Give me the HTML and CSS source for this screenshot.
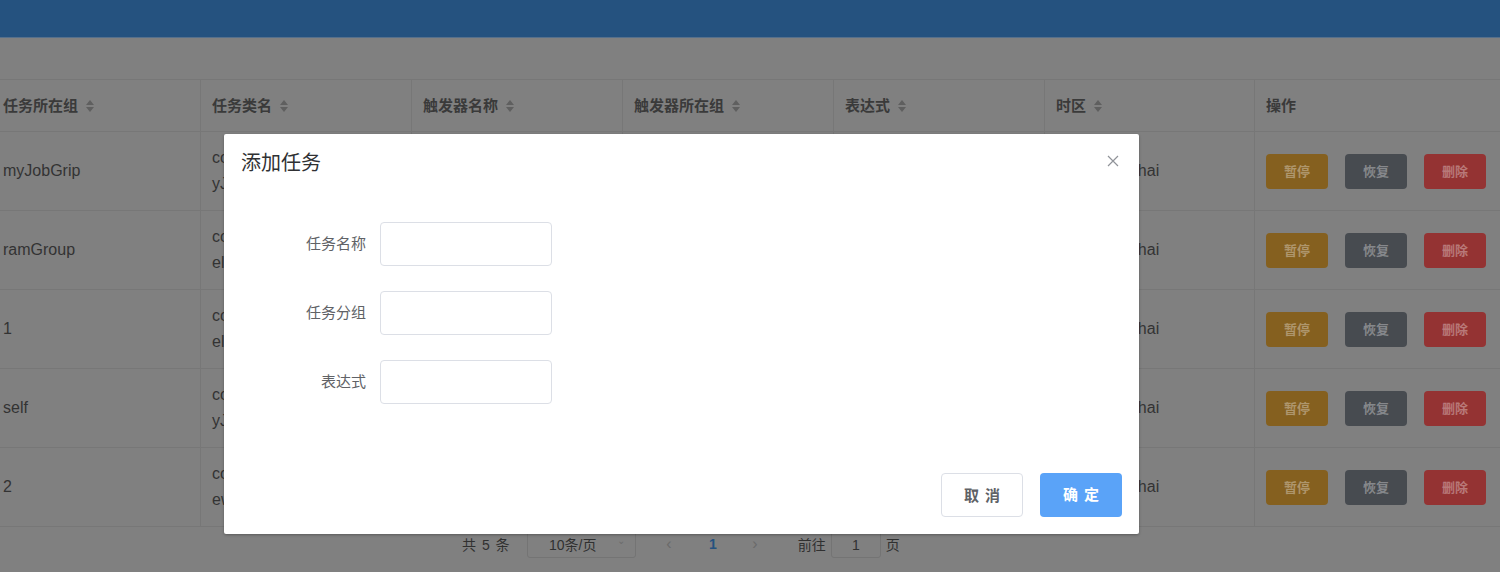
FILE: index.html
```html
<!DOCTYPE html>
<html>
	<head>
		<title>任务管理</title>
		<link rel="stylesheet" href="styles.css">
	</head>
	<body>
		<div class="topbar"></div>
		<div class="toolbar"></div>

		<table class="job_table">
			<thead>
				<tr>
					<th class="col_first">任务所在组 <span class="sort"></span></th>
					<th>任务类名 <span class="sort"></span></th>
					<th>触发器名称 <span class="sort"></span></th>
					<th>触发器所在组 <span class="sort"></span></th>
					<th>表达式 <span class="sort"></span></th>
					<th class="col_zone">时区 <span class="sort"></span></th>
					<th class="col_last">操作</th>
				</tr>
			</thead>
			<tbody>
				<tr>
					<td>myJobGrip</td>
					<td class="two_line">com.quartz.job.M<br>yJob</td>
					<td>myTrigger</td>
					<td>myTriggerGroup</td>
					<td>0/5 * * * * ?</td>
					<td>Asia/Shanghai</td>
					<td class="ops"><span class="btn warn">暂停</span><span class="btn info">恢复</span><span class="btn danger">删除</span></td>
				</tr>
				<tr>
					<td>ramGroup</td>
					<td class="two_line">com.quartz.job.Ram<br>elJob</td>
					<td>ramTrigger</td>
					<td>ramTriggerGroup</td>
					<td>0/10 * * * * ?</td>
					<td>Asia/Shanghai</td>
					<td class="ops"><span class="btn warn">暂停</span><span class="btn info">恢复</span><span class="btn danger">删除</span></td>
				</tr>
				<tr>
					<td>1</td>
					<td class="two_line">com.quartz.job.Mod<br>elJob</td>
					<td>1</td>
					<td>1</td>
					<td>0/20 * * * * ?</td>
					<td>Asia/Shanghai</td>
					<td class="ops"><span class="btn warn">暂停</span><span class="btn info">恢复</span><span class="btn danger">删除</span></td>
				</tr>
				<tr>
					<td>self</td>
					<td class="two_line">com.quartz.job.M<br>yJob</td>
					<td>self</td>
					<td>self</td>
					<td>0/30 * * * * ?</td>
					<td>Asia/Shanghai</td>
					<td class="ops"><span class="btn warn">暂停</span><span class="btn info">恢复</span><span class="btn danger">删除</span></td>
				</tr>
				<tr>
					<td>2</td>
					<td class="two_line">com.quartz.job.N<br>ewJob</td>
					<td>2</td>
					<td>2</td>
					<td>0 0/1 * * * ?</td>
					<td>Asia/Shanghai</td>
					<td class="ops"><span class="btn warn">暂停</span><span class="btn info">恢复</span><span class="btn danger">删除</span></td>
				</tr>
			</tbody>
		</table>

		<div class="pager">
			<span class="total">共 5 条</span>
			<span class="size_select">10条/页 <span class="arrow">&#8964;</span></span>
			<span class="nav prev">&#8249;</span>
			<span class="page_num">1</span>
			<span class="nav next">&#8250;</span>
			<span class="jump">前往</span>
			<span class="jump_box">1</span>
			<span class="jump_unit">页</span>
		</div>

		<div class="dialog">
			<div class="dialog_head">
				<span class="dialog_title">添加任务</span>
				<svg class="dialog_close" width="12" height="12" viewBox="0 0 12 12">
					<path d="M1 1 L11 11 M11 1 L1 11" stroke="#909399" stroke-width="1.2" fill="none"/>
				</svg>
			</div>
			<div class="dialog_body">
				<div class="form_item">
					<label class="form_label">任务名称</label>
					<input class="form_input" type="text">
				</div>
				<div class="form_item">
					<label class="form_label">任务分组</label>
					<input class="form_input" type="text">
				</div>
				<div class="form_item">
					<label class="form_label">表达式</label>
					<input class="form_input" type="text">
				</div>
			</div>
			<div class="dialog_foot">
				<span class="foot_btn cancel">取 消</span>
				<span class="foot_btn ok">确 定</span>
			</div>
		</div>
	</body>
</html>
```

FILE: styles.css
```css
body {
	margin: 0;
	background: #808080;
	font-family: "Liberation Sans", "Noto Sans CJK SC", sans-serif;
	color: #333;
	overflow: hidden;
	height: 572px;
}

.topbar {
	height: 37px;
	background: #25527f;
	border-bottom: 1px solid #56708c;
}

.toolbar {
	height: 41px;
}

/* table behind the mask */
.job_table {
	border-collapse: collapse;
	table-layout: fixed;
	width: 1510px;
	margin-left: -8px;
	border-top: 1px solid #777;
}

.job_table th,
.job_table td {
	border-right: 1px solid #777;
	border-bottom: 1px solid #777;
	padding: 0 11px;
	text-align: left;
	vertical-align: middle;
	overflow: hidden;
	white-space: nowrap;
}

.job_table th {
	height: 49px;
	padding-bottom: 2px;
	font-size: 15px;
	font-weight: bold;
	color: #3a3a3a;
	width: 188px;
}

.job_table th.col_first {
	width: 186px;
}

.job_table th.col_zone {
	width: 187px;
}

.job_table th.col_last {
	width: 230px;
	border-right: none;
}

.job_table td {
	height: 78px;
	font-size: 16px;
	color: #333;
}

.job_table td.two_line {
	line-height: 26px;
}

.sort {
	display: inline-block;
	width: 8px;
	height: 12px;
	margin-left: 4px;
	vertical-align: -1px;
	position: relative;
}

.sort:before,
.sort:after {
	content: "";
	position: absolute;
	left: 0;
	border-left: 4px solid transparent;
	border-right: 4px solid transparent;
}

.sort:before {
	top: 0;
	border-bottom: 5px solid #5f5f5f;
}

.sort:after {
	bottom: 0;
	border-top: 5px solid #5f5f5f;
}

.ops {
	font-size: 0;
}

.btn {
	display: inline-block;
	width: 62px;
	height: 35px;
	line-height: 35px;
	margin-right: 17px;
	border-radius: 4px;
	text-align: center;
	font-size: 13px;
	font-weight: bold;
	color: rgba(255, 255, 255, 0.35);
}

.btn.warn {
	background: #85601f;
}

.btn.info {
	background: #474b50;
}

.btn.danger {
	background: #943333;
	margin-right: 0;
}

/* pagination */
.pager {
	display: flex;
	align-items: center;
	height: 28px;
	padding-top: 3px;
	padding-left: 462px;
	font-size: 14px;
	color: #303030;
}

.total {
	width: 48px;
	margin-right: 17px;
	word-spacing: 2px;
}

.size_select {
	width: 109px;
	height: 28px;
	line-height: 28px;
	border: 1px solid #747474;
	border-radius: 3px;
	box-sizing: border-box;
	padding-left: 21px;
	font-size: 14px;
	position: relative;
}

.arrow {
	position: absolute;
	right: 10px;
	top: -4px;
	font-size: 10px;
	color: #6c6c6c;
}

.nav {
	width: 18px;
	text-align: center;
	color: #6a6a6a;
	font-size: 16px;
}

.nav.prev {
	margin-left: 24px;
}

.nav.next {
	margin-left: 29px;
}

.page_num {
	margin-left: 31px;
	color: #25527f;
	font-weight: bold;
}

.jump {
	margin-left: 34px;
}

.jump_box {
	width: 50px;
	height: 28px;
	line-height: 28px;
	text-align: center;
	border: 1px solid #747474;
	border-radius: 3px;
	box-sizing: border-box;
	margin-left: 5px;
}

.jump_unit {
	margin-left: 5px;
}

/* dialog */
.dialog {
	position: absolute;
	left: 224px;
	top: 134px;
	width: 915px;
	height: 400px;
	background: #fff;
	border-radius: 2px;
	box-shadow: 0 1px 3px rgba(0, 0, 0, 0.3);
	display: flex;
	flex-direction: column;
}

.dialog_head {
	position: relative;
	padding: 17px 20px 0 17px;
	height: 24px;
}

.dialog_title {
	font-size: 20px;
	line-height: 24px;
	color: #303133;
}

.dialog_close {
	position: absolute;
	right: 20px;
	top: 21px;
}

.dialog_body {
	flex: 1;
	padding: 47px 20px 0 20px;
}

.form_item {
	display: flex;
	align-items: center;
	margin-bottom: 25px;
}

.form_label {
	width: 136px;
	box-sizing: border-box;
	padding-right: 14px;
	padding-bottom: 3px;
	text-align: right;
	font-size: 15px;
	color: #606266;
}

.form_input {
	width: 172px;
	height: 44px;
	box-sizing: border-box;
	border: 1px solid #dcdfe6;
	border-radius: 4px;
	outline: none;
}

.dialog_foot {
	display: flex;
	justify-content: flex-end;
	gap: 17px;
	padding: 0 17px 17px 0;
}

.foot_btn {
	width: 82px;
	height: 44px;
	line-height: 44px;
	box-sizing: border-box;
	border-radius: 4px;
	text-align: center;
	font-size: 15px;
	font-weight: bold;
	word-spacing: 2px;
}

.foot_btn.cancel {
	border: 1px solid #dcdfe6;
	color: #606266;
	background: #fff;
}

.foot_btn.ok {
	background: #5aa3f8;
	color: #fff;
}
```
